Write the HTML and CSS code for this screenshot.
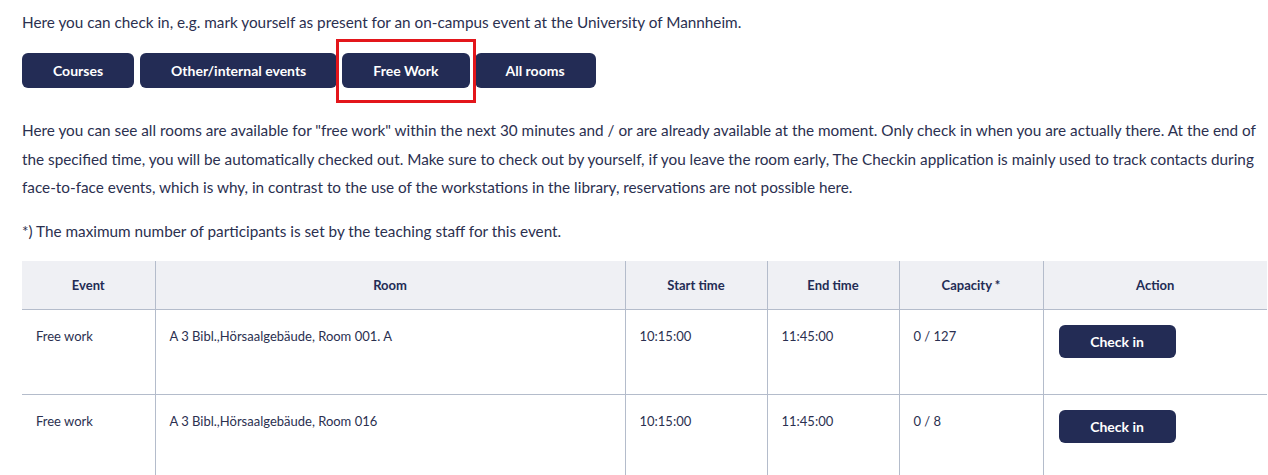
FILE: index.html
```html
<!DOCTYPE html>
<html>
<head>
<meta charset="utf-8">
<link rel="stylesheet" href="styles.css">
</head>
<body>
<main class="page">
  <p class="intro">Here you can check in, e.g. mark yourself as present for an on-campus event at the University of Mannheim.</p>
  <nav class="tabs">
    <a class="tab">Courses</a>
    <a class="tab">Other/internal events</a>
    <span class="tab-focus"><a class="tab">Free Work</a></span>
    <a class="tab">All rooms</a>
  </nav>
  <p class="desc">Here you can see all rooms are available for "free work" within the next 30 minutes and / or are already available at the moment. Only check in when you are actually there. At the end of the specified time, you will be automatically checked out. Make sure to check out by yourself, if you leave the room early, The Checkin application is mainly used to track contacts during face-to-face events, which is why, in contrast to the use of the workstations in the library, reservations are not possible here.</p>
  <p class="note">*) The maximum number of participants is set by the teaching staff for this event.</p>
  <table class="rooms">
    <colgroup>
      <col class="c-event"><col class="c-room"><col class="c-start"><col class="c-end"><col class="c-cap"><col class="c-action">
    </colgroup>
    <thead>
      <tr><th>Event</th><th>Room</th><th>Start time</th><th>End time</th><th>Capacity *</th><th>Action</th></tr>
    </thead>
    <tbody>
      <tr><td>Free work</td><td>A 3 Bibl.,Hörsaalgebäude, Room 001. A</td><td>10:15:00</td><td>11:45:00</td><td>0 / 127</td><td><button class="checkin">Check in</button></td></tr>
      <tr><td>Free work</td><td>A 3 Bibl.,Hörsaalgebäude, Room 016</td><td>10:15:00</td><td>11:45:00</td><td>0 / 8</td><td><button class="checkin">Check in</button></td></tr>
    </tbody>
  </table>
</main>
</body>
</html>
```
FILE: styles.css
```css
html, body {
  margin: 0;
  padding: 0;
  background: #ffffff;
  overflow: hidden;
}
body {
  font-family: Lato, "Open Sans", "Liberation Sans", sans-serif;
  color: #2b3050;
  font-size: 15.3px;
}
.page {
  padding: 11px 0 0 22px;
  width: 1300px;
}
.intro {
  margin: 0;
  line-height: 22px;
}
.tabs {
  display: flex;
  align-items: center;
  gap: 6px;
  margin-top: 20px;
  height: 35px;
}
.tab {
  display: flex;
  align-items: center;
  justify-content: center;
  height: 35px;
  padding: 0 31px;
  background: #232c55;
  color: #ffffff;
  font-weight: 700;
  font-size: 14px;
  border-radius: 6px;
}
.tab-focus {
  display: flex;
  outline: 3px solid #e3161b;
  outline-offset: 0;
  padding: 11px 3px 12px;
  margin: 0 -4px;
  position: relative;
}
.desc {
  margin: 28px 0 0;
  line-height: 28.5px;
  width: 1240px;
}
.note {
  margin: 15px 0 0;
  line-height: 28px;
}
.rooms {
  margin-top: 16px;
  border-collapse: collapse;
  table-layout: fixed;
  width: 1245px;
  font-size: 13px;
}
.c-event { width: 133px; }
.c-room { width: 470px; }
.c-start { width: 142px; }
.c-end { width: 132px; }
.c-cap { width: 144px; }
.c-action { width: 224px; }
.rooms th {
  background: #eff0f4;
  height: 48px;
  font-weight: 700;
  text-align: center;
  padding: 0 14px;
  border-bottom: 1px solid #b4bccb;
  color: #232c55;
}
.rooms th + th, .rooms td + td {
  border-left: 1px solid #b4bccb;
}
.rooms td {
  vertical-align: top;
  padding: 18px 14px 0;
  height: 66px;
  border-bottom: 1px solid #b4bccb;
  line-height: 16px;
}
.rooms td:last-child {
  padding-top: 15px;
  padding-left: 15px;
}
.checkin {
  display: block;
  width: 117px;
  height: 33px;
  background: #232c55;
  color: #ffffff;
  border: 0;
  border-radius: 6px;
  font-family: inherit;
  font-weight: 700;
  font-size: 14px;
}
```
